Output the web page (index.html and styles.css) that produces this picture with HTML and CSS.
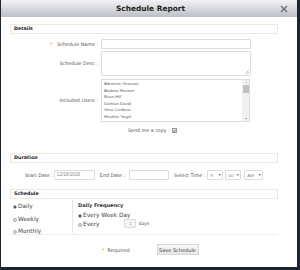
FILE: index.html
```html
<!DOCTYPE html>
<html lang="en">
<head>
<meta charset="UTF-8">
<title>Schedule Report</title>
<link rel="stylesheet" href="styles.css">
</head>
<body>

<div class="dialog">
  <div class="titlebar">
    <span class="title">Schedule Report</span>
    <svg class="close" width="8" height="8" viewBox="0 0 8 8"><path d="M1 1 L7 7 M7 1 L1 7" stroke="#6b6e75" stroke-width="1.4"/></svg>
  </div>

  <div class="content">
    <div class="section-head">Details</div>

    <div class="row row-name">
      <label class="label"><span class="req">*</span> Schedule Name :</label>
      <div class="input"></div>
    </div>
    <div class="row row-desc">
      <label class="label">Schedule Desc :</label>
      <div class="input textarea">
        <svg class="grip" width="4" height="4" viewBox="0 0 4 4"><path d="M0 4 L4 0 M2 4 L4 2" stroke="#999" stroke-width="0.6"/></svg>
      </div>
    </div>
    <div class="row row-users">
      <label class="label">Included Users :</label>
      <div class="listbox">
        <div class="items">
          <div>Adrienne Grasson</div>
          <div>Andrew Haslam</div>
          <div>Brian Hill</div>
          <div>Damian David</div>
          <div>Gina Cardova</div>
          <div>Heather Vogel</div>
          <div>Ivan Brown</div>
        </div>
        <div class="scrollbar">
          <span class="arrow up"></span>
          <span class="thumb"></span>
          <span class="arrow down"></span>
        </div>
      </div>
    </div>
    <div class="copy-row">
      <span>Send me a copy :</span>
      <span class="checkbox">
        <svg width="4" height="4" viewBox="0 0 4 4"><path d="M0.5 2 L1.5 3.2 L3.5 0.6" stroke="#333" stroke-width="0.8" fill="none"/></svg>
      </span>
    </div>

    <div class="section-head section-duration">Duration</div>
    <div class="date-row">
      <span>Start Date :</span>
      <div class="input date-input start">12/18/2019</div>
      <span>End Date :</span>
      <div class="input date-input end"></div>
      <span>Select Time :</span>
      <div class="select sel-hour"><span>9</span><span class="caret">&#9660;</span></div>
      <div class="select sel-min"><span>00</span><span class="caret">&#9660;</span></div>
      <div class="select sel-ampm"><span>AM</span><span class="caret">&#9660;</span></div>
    </div>

    <div class="section-head section-schedule">Schedule</div>
    <div class="schedule">
      <div class="freq-col">
        <div class="radio-line"><span class="radio checked"></span>Daily</div>
        <div class="radio-line"><span class="radio"></span>Weekly</div>
        <div class="radio-line"><span class="radio"></span>Monthly</div>
      </div>
      <div class="detail-col">
        <div class="detail-title">Daily Frequency</div>
        <div class="radio-line small"><span class="radio checked"></span>Every Week Day</div>
        <div class="radio-line small"><span class="radio"></span>Every <span class="input days">1</span><span class="days-text">days</span></div>
      </div>
    </div>

    <div class="footer">
      <span class="req">*</span>
      <span class="required-text">Required</span>
      <button class="save">Save Schedule</button>
    </div>
  </div>
</div>

</body>
</html>
```

FILE: styles.css
```css
body {
  margin: 0;
  background-color: #1c2431;
  font-family: "DejaVu Sans", Verdana, sans-serif;
  color: #555;
}

.dialog {
  width: 296px;
  height: 267px;
  margin-left: 1px;
  background-color: #fff;
}

.titlebar {
  position: relative;
  height: 17px;
  background: linear-gradient(#f3f3f5, #bcbfc6);
  display: flex;
  align-items: center;
  justify-content: center;
}

.title {
  font-size: 7.4px;
  font-weight: bold;
  color: #222;
  margin-left: 3px;
}

.close {
  position: absolute;
  right: 9px;
  top: 5px;
}

.content {
  padding: 0 19px 0 9px;
}

.section-head {
  height: 10px;
  box-sizing: border-box;
  border: 1px solid #ebe9dc;
  margin-top: 7px;
  padding-left: 3px;
  font-size: 4.8px;
  font-weight: bold;
  color: #222;
  line-height: 8px;
}

.row {
  display: grid;
  grid-template-columns: 88px 150px;
  column-gap: 3px;
  align-items: center;
}

.label {
  text-align: right;
  font-size: 4.8px;
}

.req {
  color: #e8962f;
  margin-right: 3px;
}

.input {
  box-sizing: border-box;
  height: 10px;
  border: 1px solid #dcdcdc;
  border-radius: 1px;
  background-color: #fff;
}

.row-name {
  margin-top: 5px;
}

.row-desc {
  margin-top: 2px;
}

.textarea {
  position: relative;
  height: 25px;
}

.grip {
  position: absolute;
  right: 1px;
  bottom: 1px;
}

.row-users {
  margin-top: 3px;
}

.listbox {
  box-sizing: border-box;
  height: 43px;
  width: 149px;
  border: 1px solid #dcdcdc;
  display: flex;
  overflow: hidden;
}

.items {
  flex: 1;
  padding: 1px 0 0 2px;
  font-family: "Liberation Sans", Arial, sans-serif;
  font-size: 4.3px;
  line-height: 6.5px;
  color: #666;
}

.scrollbar {
  width: 7px;
  background-color: #f1f1f1;
  display: flex;
  flex-direction: column;
  align-items: center;
}

.arrow {
  width: 0;
  height: 0;
  border-left: 1.5px solid transparent;
  border-right: 1.5px solid transparent;
  margin: 2px 0;
}

.arrow.up {
  border-bottom: 1.5px solid #a8a8a8;
}

.arrow.down {
  border-top: 1.5px solid #555;
  margin-top: auto;
}

.thumb {
  width: 6px;
  height: 8px;
  background-color: #c1c1c1;
}

.copy-row {
  margin-top: 5px;
  padding-left: 118px;
  height: 7px;
  display: flex;
  align-items: center;
  font-size: 4.8px;
}

.checkbox {
  box-sizing: border-box;
  width: 5px;
  height: 5px;
  margin-left: 2px;
  border: 0.5px solid #999;
  background-color: #e6e6e6;
  display: flex;
  align-items: center;
  justify-content: center;
}

.section-duration {
  margin-top: 19px;
}

.date-row {
  margin-top: 7px;
  padding-left: 15px;
  display: flex;
  align-items: center;
  font-size: 4.8px;
}

.date-input {
  font-family: "Liberation Sans", Arial, sans-serif;
  font-size: 4.6px;
  color: #888;
  line-height: 8px;
  padding-left: 2px;
  margin: 0 5px 0 1px;
}

.date-input.start {
  width: 41px;
}

.date-input.end {
  width: 40px;
  margin-left: 4px;
}

.select {
  box-sizing: border-box;
  height: 10px;
  border: 1px solid #dcdcdc;
  border-radius: 1px;
  display: flex;
  align-items: center;
  justify-content: space-between;
  padding: 0 1px 0 2px;
  font-family: "Liberation Sans", Arial, sans-serif;
  font-size: 4.4px;
  color: #888;
  margin-left: 2px;
}

.caret {
  font-size: 3px;
  color: #333;
}

.sel-hour {
  width: 16px;
}

.sel-min {
  width: 16px;
}

.sel-ampm {
  width: 19px;
  margin-left: 3px;
}

.section-schedule {
  margin-top: 9px;
}

.schedule {
  display: flex;
  height: 36px;
  box-sizing: border-box;
  border-bottom: 1px solid #eeeeee;
}

.freq-col {
  width: 63px;
  border-right: 1px solid #e4e4e4;
  margin: 1px 0 1px;
  padding-left: 3px;
  box-sizing: border-box;
}

.radio-line {
  display: flex;
  align-items: center;
  height: 12.5px;
  font-size: 5.8px;
  color: #444;
}

.radio {
  box-sizing: border-box;
  width: 4px;
  height: 4px;
  border-radius: 50%;
  border: 0.5px solid #aaa;
  background-color: #e2e2e2;
  margin-right: 1px;
  margin-top: 2px;
}

.radio.checked {
  background: radial-gradient(circle, #333 0 0.8px, #e2e2e2 1px);
}

.detail-col {
  padding: 2px 0 0 5px;
}

.detail-title {
  height: 9px;
  line-height: 9px;
  font-size: 5px;
  font-weight: bold;
  color: #333;
}

.radio-line.small {
  height: 9px;
}

.days {
  width: 12px;
  height: 9px;
  margin: 0 2px 0 25px;
  font-family: "Liberation Sans", Arial, sans-serif;
  font-size: 4px;
  color: #888;
  text-align: center;
  line-height: 7px;
  background-color: #f4f4f4;
}

.days-text {
  font-size: 4.6px;
  color: #555;
}

.footer {
  margin-top: 9px;
  padding-left: 92px;
  display: flex;
  align-items: center;
  height: 11px;
  font-size: 5px;
}

.footer .req {
  margin-right: 3px;
}

.required-text {
  width: 49px;
}

.save {
  height: 11px;
  width: 42px;
  padding: 0;
  border: 1px solid #d8d8d8;
  background: linear-gradient(#f8f8f8, #e6e6e6);
  font-family: "DejaVu Sans", Verdana, sans-serif;
  font-size: 5px;
  color: #444;
}
```
